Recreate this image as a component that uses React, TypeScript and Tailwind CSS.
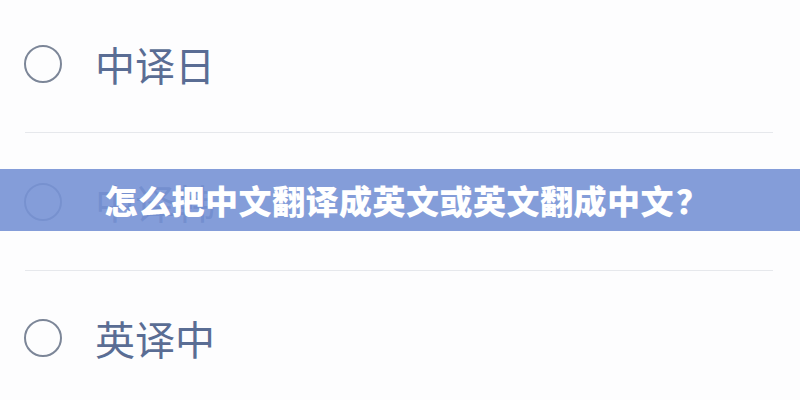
import React from 'react';

const options = ['中译日', '中译韩', '英译中'];

const Radio: React.FC<{ label: string }> = ({ label }) => (
  <div className="flex items-center pl-[24px] gap-[33px]">
    <div className="w-[38px] h-[38px] rounded-full border-2 border-[#7c8698]" />
    <span className="text-[40px] leading-none text-[#5a6d94]">{label}</span>
  </div>
);

const App: React.FC = () => {
  return (
    <div
      className="relative w-[800px] h-[400px] overflow-hidden bg-[#fdfdfe]"
      style={{ fontFamily: '"Noto Sans CJK SC", "Noto Sans", sans-serif' }}
    >
      <div className="flex flex-col">
        <div className="h-[132px] pb-[4px] flex items-center">
          <Radio label={options[0]} />
        </div>
        <div className="mx-[25px] mr-[27px] h-px bg-[#e6e8ec]" />
        <div className="h-[137px] flex items-center">
          <Radio label={options[1]} />
        </div>
        <div className="mx-[25px] mr-[27px] h-px bg-[#e6e8ec]" />
        <div className="h-[134px] flex items-center">
          <Radio label={options[2]} />
        </div>
      </div>

      {/* 제목 배너: 목록 위에 반투명으로 겹침 */}
      <div className="absolute left-0 right-0 top-[169px] h-[62px] bg-[#7792d5]/[0.9] flex items-center justify-center">
        <span className="ml-[14px] text-[33px] leading-none font-black text-white tracking-[0.5px]">
          怎么把中文翻译成英文或英文翻成中文<span className="pl-[2px]">？</span>
        </span>
      </div>
    </div>
  );
};

export default App;
